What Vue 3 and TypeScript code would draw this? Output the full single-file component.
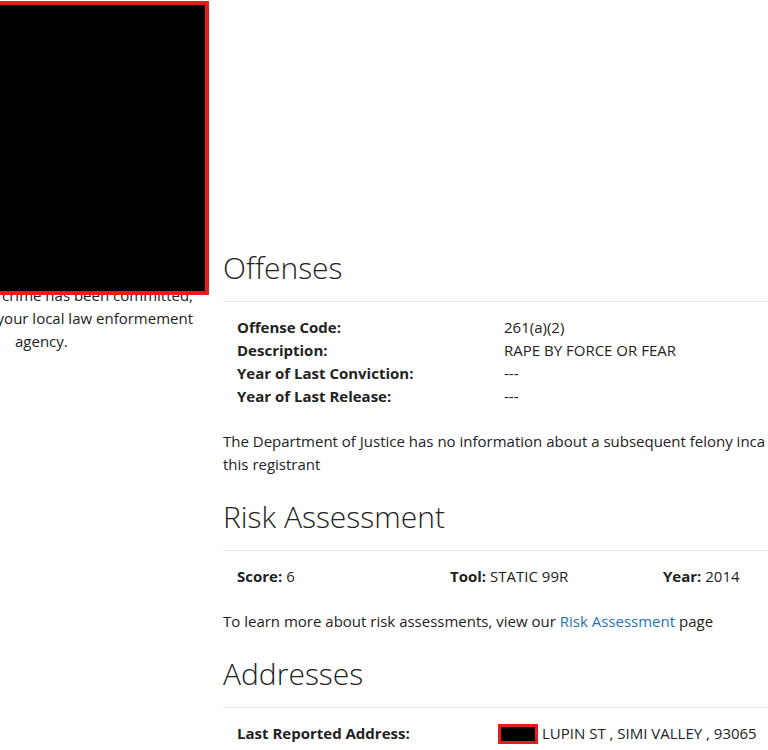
<script setup lang="ts">
interface Entry {
  label: string
  value: string
}

const offense: Entry[] = [
  { label: 'Offense Code:', value: '261(a)(2)' },
  { label: 'Description:', value: 'RAPE BY FORCE OR FEAR' },
  { label: 'Year of Last Conviction:', value: '---' },
  { label: 'Year of Last Release:', value: '---' },
]

const risk: Entry[] = [
  { label: 'Score:', value: '6' },
  { label: 'Tool:', value: 'STATIC 99R' },
  { label: 'Year:', value: '2014' },
]
</script>

<template>
  <div class="page">
    <aside class="side">
      <div class="photo"></div>
      <p class="notice">
        <span>crime has been committed,</span>
        <span>your local law enformement</span>
        <span class="last">agency.</span>
      </p>
    </aside>
    <main class="main">
      <section>
        <h2>Offenses</h2>
        <dl class="details">
          <div v-for="e in offense" :key="e.label" class="pair">
            <dt>{{ e.label }}</dt>
            <dd>{{ e.value }}</dd>
          </div>
        </dl>
        <p class="text">
          The Department of Justice has no information about a subsequent felony inca<br />this registrant
        </p>
      </section>
      <section>
        <h2>Risk Assessment</h2>
        <dl class="details risk">
          <div v-for="e in risk" :key="e.label">
            <dt>{{ e.label }}</dt>{{ ' ' }}<dd>{{ e.value }}</dd>
          </div>
        </dl>
        <p class="text">
          To learn more about risk assessments, view our <a href="#">Risk Assessment</a> page
        </p>
      </section>
      <section>
        <h2>Addresses</h2>
        <dl class="details">
          <div class="pair address">
            <dt>Last Reported Address:</dt>
            <dd><span class="redacted"></span>LUPIN ST , SIMI VALLEY , 93065</dd>
          </div>
        </dl>
      </section>
    </main>
  </div>
</template>

<style>
body {
  background: #fff;
  overflow-x: hidden;
}
</style>

<style scoped>
.page {
  display: grid;
  grid-template-columns: 209px minmax(0, 1fr);
  column-gap: 14px;
  font: 15px/23px "Open Sans", sans-serif;
  color: #222;
}
.photo {
  position: relative;
  height: 286px;
  margin-top: 1px;
  background: #000;
  border: 4px solid #ec1a1a;
  border-left: 0;
}
.notice {
  display: flex;
  flex-direction: column;
  align-items: flex-end;
  margin: -11px 0 0;
  padding-right: 16px;
  white-space: nowrap;
}
.notice .last {
  align-self: flex-start;
  padding-left: 15px;
}
.main {
  padding-top: 245px;
}
h2 {
  margin: 0;
  padding-bottom: 10px;
  border-bottom: 1px solid #e8e8e8;
  font-size: 30px;
  font-weight: 300;
  line-height: 46px;
}
.details {
  margin: 0;
  padding: 14px 0 0 14px;
}
.pair {
  display: grid;
  grid-template-columns: 267px 1fr;
}
dt {
  font-weight: 700;
}
dd {
  margin: 0;
  white-space: nowrap;
}
.text {
  margin: 0;
  padding: 22px 0 18px;
  white-space: nowrap;
}
.risk {
  display: grid;
  grid-template-columns: 213px 213px 1fr;
}
.risk dt,
.risk dd {
  display: inline;
}
a {
  color: #1c75b5;
  text-decoration: none;
}
.address {
  grid-template-columns: 261px 1fr;
}
.address dd {
  display: flex;
  align-items: center;
  gap: 4px;
}
.redacted {
  width: 34px;
  height: 14px;
  background: #000;
  border: 3px solid #ec1a1a;
}
</style>
